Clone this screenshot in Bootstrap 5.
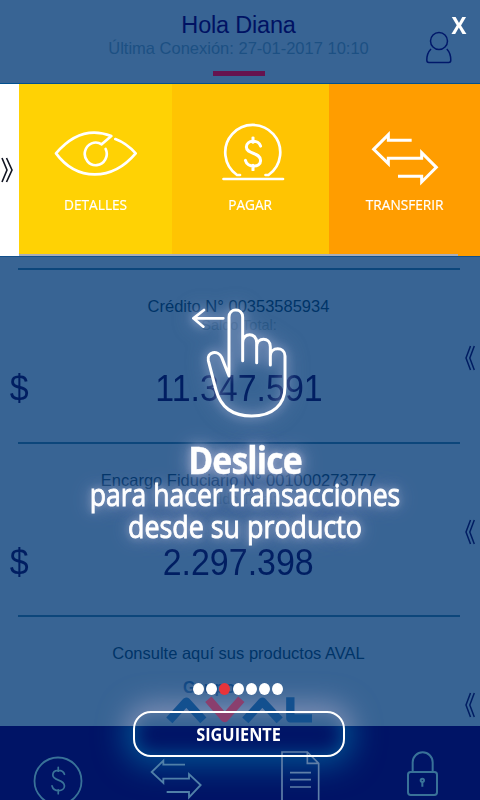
<!DOCTYPE html>
<html lang="es">
<head>
<meta charset="utf-8">
<meta name="viewport" content="width=device-width, initial-scale=1">
<title>Hola Diana</title>
<link href="https://cdn.jsdelivr.net/npm/bootstrap@5.3.0/dist/css/bootstrap.min.css" rel="stylesheet">
<style>
body{margin:0;background:#386494;font-family:"Liberation Sans",Arial,sans-serif;color:#003468}
svg{display:block;fill:none}
.phone{width:480px;height:800px;background:#386494}
.topbar{height:84px;border-bottom:1px solid #00508f;padding:12px 3px 0 0}
.hello{font-size:23.5px;line-height:26px;color:#001263;letter-spacing:-.2px}
.last-seen{font-size:16.5px;line-height:20px;color:#1c5083}
.accent{width:52px;height:5px;background:#66134f;margin-top:13px}
.user-icon{right:28px;top:31px}
.swipe{height:173px;border-bottom:1px solid #12508b;font-family:"Open Sans","Noto Sans",sans-serif;color:#fff}
.edge{width:19px;background:#fff}
.tile{padding-top:39px}
.tile svg{height:64px}
.tile span{font-size:15px;line-height:20px;margin-top:7px;transform:scaleX(.91);white-space:nowrap;-webkit-text-stroke:.2px #fff}
.t1{width:153px;background:#ffd204;border-bottom:2px solid #a9adb8}
.t2{width:157px;background:#ffc402;border-bottom:2px solid #a9adb8}
.t3{width:151px;background:#ff9d00}
.strip{width:129px;height:2px;background:#a9adb8;left:329px;bottom:0}
.rule{height:2px;background:#0c467b;margin:11px 20px 0 18px}
.product{height:173.5px;padding-top:26px}
.product .rule{left:0;right:0;bottom:0;margin-top:0}
.pname{font-size:16.5px;line-height:20px;padding-right:3px}
.plabel{font-size:14.5px;line-height:18px;color:#265584;padding-right:2px}
.amount{font-size:36.5px;line-height:40px;color:#001e62;padding-right:3px;margin-top:35px}
.amount .fig{display:inline-block;transform:scaleX(.93)}
.cur{left:9px;transform:scaleX(.93)}
.chev{right:5px;top:75px}
.grupo{font-size:16px;line-height:18px;letter-spacing:1px;font-weight:700;color:#0b4582;margin:16px 0 0 183px}
.logo{margin:-1px 0 0 166px;z-index:1}
.bottombar{left:0;right:0;top:726px;height:74px;background:#001466;padding:24px 0 0 33px;overflow:hidden;z-index:2}
.glow{left:133px;width:212px;height:46px;border-radius:18px}
.glow-top{top:0;height:726px;left:0;right:0;overflow:hidden}
.glow-top .glow{top:711px;box-shadow:0 0 28px 7px rgba(150,158,192,.75),inset 0 0 18px rgba(150,158,192,.6)}
.bottombar .glow{top:-15px;box-shadow:0 0 30px 9px rgba(0,82,145,.95),inset 0 0 18px 4px rgba(0,82,145,.9)}
.coach{inset:0;z-index:3;font-family:"Open Sans","Noto Sans",sans-serif;color:#fff;padding-top:280px}
.close-x{right:13px;top:9px;font-size:23.5px;line-height:32px;font-weight:700;transform:scaleX(.95)}
.hand{margin-left:130px;overflow:visible;filter:drop-shadow(0 0 5px rgba(170,180,215,.8)) drop-shadow(0 0 9px rgba(160,172,210,.6))}
.msg{text-shadow:0 0 8px rgba(160,170,205,.85),0 0 16px rgba(155,167,203,.85),0 0 26px rgba(155,167,203,.85);white-space:nowrap;width:490px}
.m1{font-size:38px;line-height:40px;font-weight:700;transform:scaleX(.89);letter-spacing:-1px;margin-top:9px;-webkit-text-stroke:.4px #fff}
.m2,.m3{font-size:30.5px;line-height:31.5px;-webkit-text-stroke:.9px #fff}
.m2{transform:scaleX(.87)}
.m3{transform:scaleX(.88)}
.dots{gap:2.2px;padding-right:4px;margin-top:140.5px}
.dot{width:11px;height:12px;border-radius:50%;background:#fff}
.dot.on{background:#e8343a}
.next{width:212px;height:46px;border:2px solid #fff;border-radius:18px;margin:16.5px 0 0 133px;background:none;color:#fff;font-weight:700;font-size:17.5px;line-height:42px;padding:0}
.next span{display:inline-block;transform:scaleX(.93)}
</style>
<script src="https://cdn.jsdelivr.net/npm/bootstrap@5.3.0/dist/js/bootstrap.bundle.min.js"></script>
</head>
<body>
<svg width="0" height="0" class="position-absolute" aria-hidden="true">
  <symbol id="chev" viewBox="0 0 10 26"><path d="M5.500 1 1 13l4.500 12M9.300 1 4.800 13l4.500 12" stroke="currentColor" stroke-width="1.500" fill="none"/></symbol>
  <symbol id="dollar" viewBox="0 0 20 36"><path d="M18 10C16 3 3 3 3 11c0 8 15 5 15 14 0 8-14 8-16 0M10 1v5M10 30v5" stroke="currentColor" fill="none" stroke-linecap="round"/></symbol>
</svg>
<div class="phone position-relative overflow-hidden">
  <header class="topbar d-flex flex-column align-items-center position-relative">
    <div class="hello">Hola Diana</div>
    <div class="last-seen">Última Conexión: 27-01-2017 10:10</div>
    <div class="accent"></div>
    <svg class="user-icon position-absolute" width="26" height="33" viewBox="0 0 26 33" stroke="#00186a" stroke-width="1.500"><circle cx="13" cy="10" r="8.500"/><path d="M5 18C2 21 .8 25 .8 29q0 2.500 2 2.500h20q2 0 2-2.500c0-4-1.200-8-4-11"/></svg>
  </header>

  <section class="swipe d-flex position-relative">
    <div class="edge d-flex align-items-center ps-0"><svg width="15" height="26" viewBox="0 0 15 26" stroke="#111522" stroke-width="1.600"><path d="m2 1 5 12-5 12M6.500 1l5.500 12-5.500 12"/></svg></div>
    <div class="tile t1 d-flex flex-column align-items-center">
      <svg width="84" height="64" viewBox="162 130 252 192" stroke="#fff" stroke-width="8" stroke-linejoin="round" stroke-linecap="round"><path d="M305 194 334 169C288 151 230 148 168 221c62 84 168 84 239 0q-28-31-61-43M305 194a33 34 0 1 0 12 14"/></svg>
      <span>DETALLES</span>
    </div>
    <div class="tile t2 d-flex flex-column align-items-center">
      <svg width="64" height="64" viewBox="219 122.500 64 64" overflow="visible" stroke="#fff" stroke-width="2.700" stroke-linecap="round"><path d="M223.500 178.500h59.500M240 174.500h-3a27.500 27.500 0 1 1 31.500 0h-3"/><use href="#dollar" x="243.500" y="136" width="19" height="34.500" color="#fff" stroke-width="3.200"/></svg>
      <span>PAGAR</span>
    </div>
    <div class="tile t3 d-flex flex-column align-items-center">
      <svg width="68" height="64" viewBox="393 129 204 192" stroke="#fff" stroke-width="9"><path d="M515 181h-70v-17l-44 44 44 43v-16h100v-17l44 44-44 44v-17h-71"/></svg>
      <span>TRANSFERIR</span>
    </div>
    <div class="strip position-absolute"></div>
  </section>

  <div class="rule"></div>
  <section class="product position-relative text-center">
    <div class="pname">Crédito N° 00353585934</div>
    <div class="plabel">Saldo Total:</div>
    <div class="amount"><span class="cur position-absolute">$</span><span class="fig">11.347.591</span></div>
    <svg class="chev position-absolute" width="10" height="26" color="#001d62"><use href="#chev"/></svg>
    <div class="rule position-absolute"></div>
  </section>
  <section class="product position-relative text-center">
    <div class="pname">Encargo Fiduciario N° 001000273777</div>
    <div class="plabel">Saldo Total:</div>
    <div class="amount"><span class="cur position-absolute">$</span><span class="fig">2.297.398</span></div>
    <svg class="chev position-absolute" width="10" height="26" color="#001d62"><use href="#chev"/></svg>
    <div class="rule position-absolute"></div>
  </section>
  <section class="product position-relative">
    <div class="pname text-center">Consulte aquí sus productos AVAL</div>
    <div class="grupo">Grupo</div>
    <svg class="logo position-relative" width="147" height="28" viewBox="197 203 441 84" stroke="#13508f" stroke-width="25" stroke-linejoin="round"><path d="m207 276 51-56 51 56M435 276l51-56 52 56M570 207v63h65"/><path stroke="#8a3f6e" d="m324 213 49 56 50-56"/></svg>
    <svg class="chev position-absolute" width="10" height="26" color="#001d62"><use href="#chev"/></svg>
  </section>

  <div class="glow-top position-absolute"><div class="glow position-absolute"></div></div>
  <nav class="bottombar position-absolute d-flex align-items-start">
    <div class="glow position-absolute"></div>
    <svg class="position-relative mt-1" width="50" height="50" viewBox="0 0 50 50" stroke="#397298" stroke-width="1.800"><circle cx="25" cy="27" r="23.500"/><use href="#dollar" x="17.500" y="12" width="15.500" height="29" color="#397298" stroke-width="2.200"/></svg>
    <svg class="position-relative ms-auto" width="54" height="50" viewBox="450 88 162 150" stroke="#5080a8" stroke-width="5.500"><path d="M555 132h-65v-12l-35 34 35 33v-13h77v-14l35 33-35 37v-16h-67"/></svg>
    <svg class="position-relative" style="margin-left:77px" width="40" height="50" viewBox="123 210 120 150" stroke="#5f7fa8" stroke-width="5"><path d="M126 370V216h76l34 34v120M202 216v34h34M150 278h63M150 299h63M150 321h63"/></svg>
    <svg class="position-relative" style="margin:0 40px 0 85px" width="34" height="50" viewBox="498 208 102 150" stroke="#397298" stroke-width="6"><rect x="504" y="274" width="87" height="69" rx="8"/><path d="M518 274v-29a30 30 0 0 1 60 0v29M547 302v16"/><circle cx="547" cy="299" r="5"/></svg>
  </nav>

  <div class="coach position-absolute">
    <div class="close-x position-absolute">X</div>
    <svg class="hand" width="220" height="150" viewBox="0 0 660 450" stroke="#fff" stroke-width="9" stroke-linecap="round" stroke-linejoin="round"><path d="M297 288V112c0-29 41-29 41 0v130V188c0-32 42-32 42 0v60V200c0-30 41-30 41 0v55V228c0-29 44-29 44 0v92c0 54-37 88-100 88-55 0-93-26-107-78l-23-88c-6-27 29-33 40-10Z"/><path stroke-width="8" d="M280 115h-88M222 90l-32 25 30 25"/></svg>
    <div class="msg m1 text-center">Deslice</div>
    <div class="msg m2 text-center">para hacer transacciones</div>
    <div class="msg m3 text-center">desde su producto</div>
    <div class="dots d-flex justify-content-center"><i class="dot"></i><i class="dot"></i><i class="dot on"></i><i class="dot"></i><i class="dot"></i><i class="dot"></i><i class="dot"></i></div>
    <button class="next d-block"><span>SIGUIENTE</span></button>
  </div>
</div>
</body>
</html>
